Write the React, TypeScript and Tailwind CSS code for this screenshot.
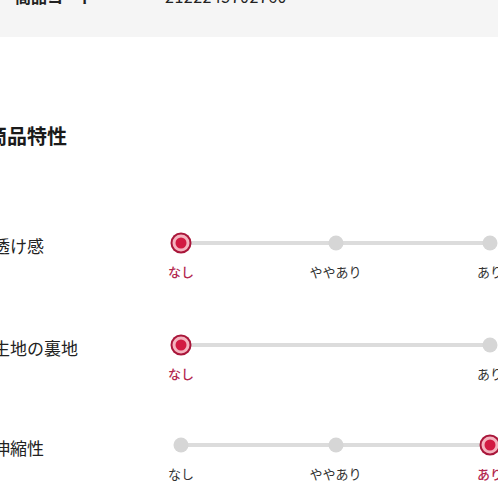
import React from "react";

const font = { fontFamily: '"Noto Sans CJK JP", "Noto Sans", sans-serif' };

type Row = { label: string; options: string[]; selected: number; gap: string };

const rows: Row[] = [
  { label: "透け感", options: ["なし", "ややあり", "あり"], selected: 0, gap: "mt-0" },
  { label: "生地の裏地", options: ["なし", "", "あり"], selected: 0, gap: "mt-[53px]" },
  { label: "伸縮性", options: ["なし", "ややあり", "あり"], selected: 2, gap: "mt-[51px]" },
];

const positions = ["left-0", "left-1/2", "left-full"];

function Dot({ active }: { active: boolean }) {
  if (active) {
    return (
      <div className="w-[21px] h-[21px] rounded-full bg-[#a9163a] flex items-center justify-center">
        <div className="w-[17px] h-[17px] rounded-full bg-[#f5b3bf] flex items-center justify-center">
          <div className="w-[11px] h-[11px] rounded-full bg-[#d21a42]" />
        </div>
      </div>
    );
  }
  return <div className="w-[15px] h-[15px] rounded-full bg-[#d6d6d6]" />;
}

function Slider({ row }: { row: Row }) {
  return (
    <div className="flex flex-col">
      <div className="relative h-[22px] w-[309px]">
        <div className="absolute left-0 right-0 top-1/2 -translate-y-1/2 h-[4px] bg-[#dcdcdc]" />
        {row.options.map((o, i) => (
          <div
            key={i}
            className={`absolute top-1/2 -translate-x-1/2 -translate-y-1/2 ${positions[i]}`}
          >
            {(o !== "" || i !== 1) && <Dot active={i === row.selected} />}
          </div>
        ))}
      </div>
      <div className="relative h-[18px] w-[309px] mt-[9px]">
        {row.options.map((o, i) =>
          o ? (
            <div
              key={i}
              className={`absolute top-0 -translate-x-1/2 whitespace-nowrap text-[13px] leading-[18px] ${positions[i]} ${
                i === row.selected ? "text-[#b3284f] font-medium" : "text-[#333333]"
              }`}
            >
              {o}
            </div>
          ) : null
        )}
      </div>
    </div>
  );
}

export default function App() {
  return (
    <div className="w-[498px] h-[498px] overflow-hidden bg-white relative" style={font}>
      <div className="h-[37px] bg-[#f5f5f5] overflow-hidden">
        <div className="flex mt-[-13px] leading-[18px] text-[16px] text-[#222222]">
          <div className="ml-[15px] w-[150px] font-bold">商品コード</div>
          <div className="tracking-[0.5px]">2122245702760</div>
        </div>
      </div>
      <div className="ml-[-13px] mt-[85px] text-[20px] leading-[28px] font-bold text-[#1a1a1a]">
        商品特性
      </div>
      <div className="flex flex-col mt-[82px]">
        {rows.map((r, idx) => (
          <div key={idx} className={`flex items-start ${r.gap}`}>
            <div className="w-[188px] ml-[-7px] h-[22px] flex items-center">
              <span className="text-[17px] leading-[22px] text-[#222222] mt-[5px]">{r.label}</span>
            </div>
            <Slider row={r} />
          </div>
        ))}
      </div>
    </div>
  );
}
